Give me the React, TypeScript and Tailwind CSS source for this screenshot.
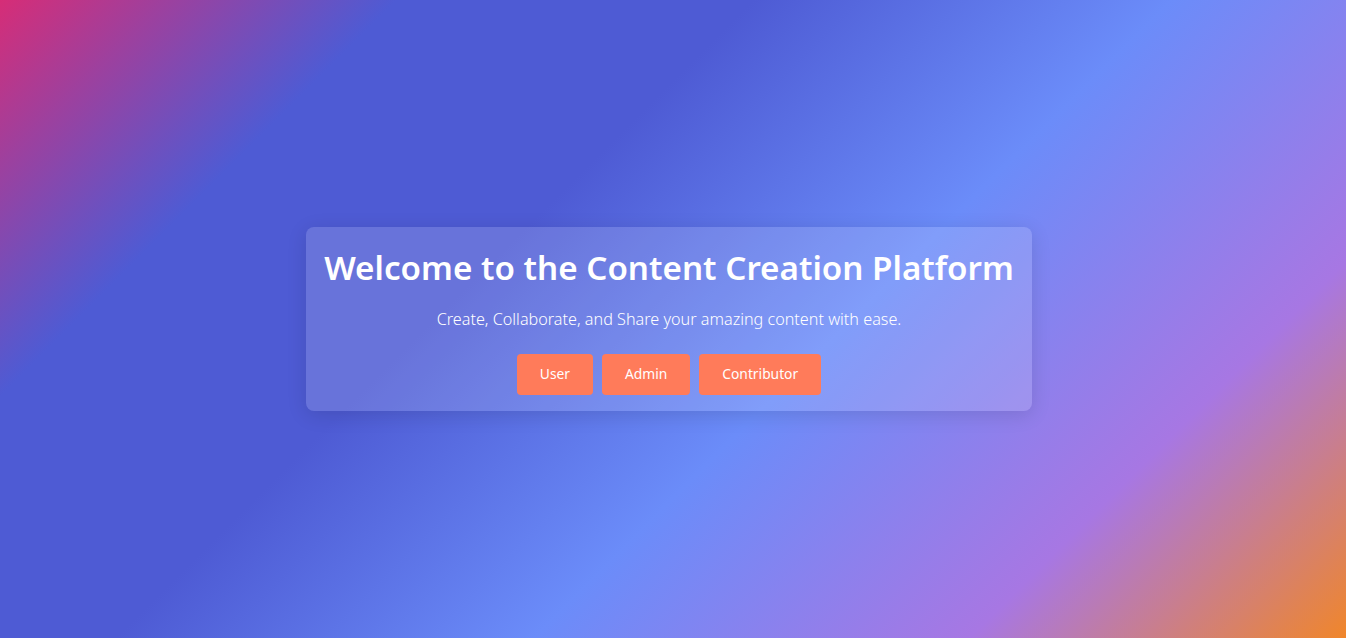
import React from "react";

export default function App() {
  return (
    <div className="w-full h-[638px] flex items-center justify-center bg-[linear-gradient(135deg,#d62d77_0%,#4e5bd4_20%,#4e5bd4_38%,#6b8cf9_59%,#a777e3_81%,#f0862b_100%)] font-['Noto_Sans',sans-serif]">
      <div className="mr-[8px] bg-white/15 rounded-lg shadow-[0_4px_20px_rgba(0,0,0,0.12)] px-[18px] pt-[19px] pb-[16px] flex flex-col items-center text-white">
        <h1 className="text-[33.2px] leading-[43px] font-semibold">Welcome to the Content Creation Platform</h1>
        <p className="mt-[18px] text-[16.2px] leading-[24px] font-light">Create, Collaborate, and Share your amazing content with ease.</p>
        <div className="mt-[23px] flex gap-[9px]">
          {["User", "Admin", "Contributor"].map((b) => (
            <button key={b} className="h-[41px] min-h-[41px] px-[23px] rounded-[4px] bg-[#ff7b5a] text-white text-[13.8px]">
              {b}
            </button>
          ))}
        </div>
      </div>
    </div>
  );
}
